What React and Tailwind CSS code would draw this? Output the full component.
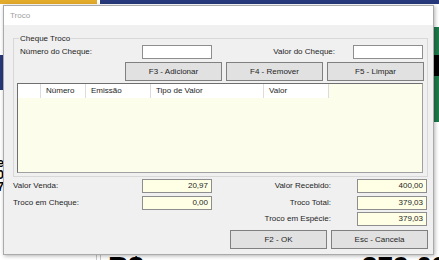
import React from 'react';

const Field = ({ value, cream }) => (
  <div
    className={`h-[14px] w-[70px] border border-[#8e8e8e] ${cream ? 'bg-[#ffffe6]' : 'bg-white'} pr-[3px] text-right leading-[12px]`}
  >
    {value}
  </div>
);

const Btn = ({ children }) => (
  <button className="h-[19px] w-[97px] border border-[#808080] bg-[#e1e1e1] text-[8px] leading-none text-[#1e1e1e]">
    {children}
  </button>
);

const columns = [
  { label: '', w: 'w-[23px]' },
  { label: 'Número', w: 'w-[45px]' },
  { label: 'Emissão', w: 'w-[65px]' },
  { label: 'Tipo de Valor', w: 'w-[113px]' },
  { label: 'Valor', w: 'w-[65px]' },
];

export default function App() {
  return (
    <div className="relative h-[260px] w-[439px] overflow-hidden bg-white font-['Liberation_Sans',Arial,sans-serif] text-[8px] text-[#1e1e1e]">
      {/* app behind the dialog */}
      <div className="absolute left-0 top-0 h-[4px] w-[97px] bg-[#e2ab2b]" />
      <div className="absolute left-[100px] right-0 top-0 h-[4px] bg-[#27397a]" />
      <div className="absolute left-0 top-[55px] h-[35px] w-[3px] bg-[#27397a]" />
      <div className="absolute right-0 top-[27px] h-[95px] w-[5px] bg-[#1f7a4a]" />
      <div className="absolute right-0 top-[55px] h-[21px] w-[5px] bg-black" />
      <div className="absolute left-[-40px] top-[157px] w-[44px] text-right text-[12px] font-bold leading-[12px] text-black">
        <div>e</div>
        <div>0</div>
        <div>7</div>
      </div>
      <div className="absolute left-[96px] top-[250px] h-[10px] w-[1px] bg-[#c8c8c8]" />
      <div className="absolute left-[100px] top-[250px] h-[10px] w-[1px] bg-[#c8c8c8]" />
      <div className="absolute left-[108px] top-[253px] text-[28px] font-bold leading-none text-black">R$</div>
      <div className="absolute left-[362px] top-[253px] text-[28px] font-bold leading-none text-black">379,03</div>

      {/* dialog */}
      <div className="absolute left-[3px] top-[5px] flex h-[250px] w-[431px] flex-col border border-[#aaaaaa] bg-[#f0f0f0] shadow-[1px_1px_4px_rgba(0,0,0,0.3)]">
        <div className="flex h-[19px] items-center bg-white pl-[6px] text-[#a0a0a0]">Troco</div>

        <div className="flex flex-col">
          <fieldset className="ml-[9px] mt-[7px] w-[415px] border border-[#d8d8d8] pb-[3px]">
            <legend className="ml-[5px] px-[1px] leading-[13px]">Cheque Troco</legend>

            <div className="flex h-[14px] items-center">
              <div className="ml-[6px] w-[122px]">Número do Cheque:</div>
              <Field value="" />
              <div className="w-[123px] text-right">Valor do Cheque:</div>
              <div className="ml-[18px]">
                <Field value="" />
              </div>
            </div>

            <div className="ml-[111px] mt-[3px] flex gap-[4px]">
              <Btn>F3 - Adicionar</Btn>
              <Btn>F4 - Remover</Btn>
              <Btn>F5 - Limpar</Btn>
            </div>

            <div className="ml-[3px] mt-[2px] h-[90px] w-[406px] border border-[#6f6f6f] border-b-[#a0a0a0] border-r-[#a0a0a0] bg-[#fdfdeb]">
              <div className="flex h-[14px]">
                {columns.map((c, i) => (
                  <div
                    key={i}
                    className={`${c.w} border-r border-[#dcdcdc] bg-white pl-[5px] leading-[13px]`}
                  >
                    {c.label}
                  </div>
                ))}
              </div>
            </div>
          </fieldset>

          <div className="mt-[2px] flex h-[14px] items-center pl-[9px]">
            <div className="w-[129px]">Valor Venda:</div>
            <Field value="20,97" cream />
            <div className="w-[119px] text-right">Valor Recebido:</div>
            <div className="ml-[26px]">
              <Field value="400,00" cream />
            </div>
          </div>
          <div className="mt-[3px] flex h-[14px] items-center pl-[9px]">
            <div className="w-[129px]">Troco em Cheque:</div>
            <Field value="0,00" cream />
            <div className="w-[119px] text-right">Troco Total:</div>
            <div className="ml-[26px]">
              <Field value="379,03" cream />
            </div>
          </div>
          <div className="mt-[2px] flex h-[14px] items-center pl-[9px]">
            <div className="w-[199px]" />
            <div className="w-[119px] text-right">Troco em Espécie:</div>
            <div className="ml-[26px]">
              <Field value="379,03" cream />
            </div>
          </div>

          <div className="mt-[4px] flex gap-[4px] pl-[226px]">
            <Btn>F2 - OK</Btn>
            <Btn>Esc - Cancela</Btn>
          </div>
        </div>
      </div>
    </div>
  );
}
